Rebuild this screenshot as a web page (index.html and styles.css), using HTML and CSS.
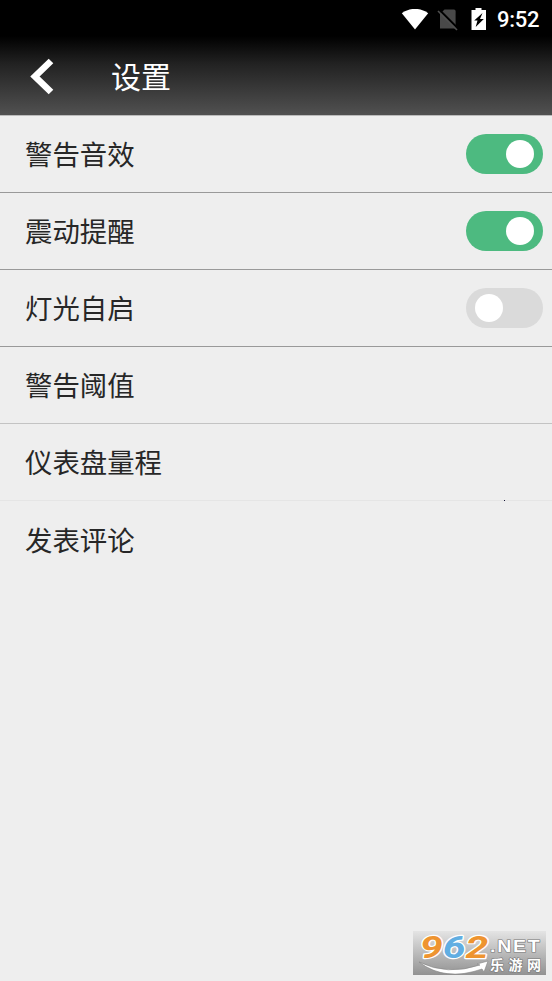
FILE: index.html
```html
<!DOCTYPE html>
<html lang="zh-CN">
<head>
<meta charset="utf-8">
<title>设置</title>
<link rel="stylesheet" href="styles.css">
</head>
<body>
<header class="top">
  <div class="status">
    <svg class="wifi" width="28" height="22" viewBox="0 0 28 22"><path d="M.8 4.2C8.500-1.600 19.500-1.600 27.200 4.200L14 20.400Z" fill="#fff"/></svg>
    <svg class="nosim" width="22" height="24" viewBox="0 0 22 24"><path d="M7.500 1.500H17q1.600 0 1.600 1.600V20.500H3V6Z" fill="#494949"/><path d="M2.200 1.800L21.500 21" stroke="#000" stroke-width="2.200"/><path d="M1 3L20 22" stroke="#505050" stroke-width="1.600"/></svg>
    <svg class="battery" width="16" height="22" viewBox="0 0 16 22"><path d="M4.500 0h6v2H15v20H.5V2h4Z" fill="#fff"/><path d="M11.500 5L3.200 12.500H6.500L4.700 19L12.800 11H9Z" fill="#000"/></svg>
    <span class="clock">9:52</span>
  </div>
  <div class="bar">
    <svg class="back" width="24" height="38" viewBox="0 0 24 38"><path d="M21 3L5 18.500L21 34" fill="none" stroke="#fff" stroke-width="6.600"/></svg>
    <h1>设置</h1>
  </div>
</header>
<main class="list">
  <div class="row"><span>警告音效</span><i class="switch on"></i></div>
  <div class="row"><span>震动提醒</span><i class="switch on"></i></div>
  <div class="row"><span>灯光自启</span><i class="switch"></i></div>
  <div class="row light"><span>警告阈值</span></div>
  <div class="row faint"><span>仪表盘量程</span></div>
  <div class="row last"><span>发表评论</span></div>
</main>
<div class="speck"></div>
<div class="mark">
  <svg width="133" height="44" viewBox="0 0 133 44">
    <defs><linearGradient id="plate" x2="0" y2="1"><stop stop-color="#e4e4e4"/><stop offset="1" stop-color="#929292"/></linearGradient></defs>
    <rect width="133" height="44" fill="url(#plate)"/>
    <path d="M6 31Q34 45 67 34L64 33L75 30L71 41L69 38Q32 51 6 31Z" fill="#fff" stroke="#858585" stroke-width=".6"/>
    <g class="digits" transform="translate(7 27) scale(1.28 1)" stroke="#fff" stroke-width="2.400" stroke-linejoin="round" paint-order="stroke">
      <text><tspan fill="#ee9430">9</tspan><tspan fill="#61aee2">6</tspan><tspan fill="#ee9430">2</tspan></text>
    </g>
    <g fill="#fff" stroke="#777" stroke-width="1.200" paint-order="stroke">
      <text class="net" transform="translate(77 21) scale(1.15 1)">.NET</text>
      <text class="name" x="77" y="39" textLength="51">乐游网</text>
    </g>
  </svg>
</div>
</body>
</html>
```

FILE: styles.css
```css
* { box-sizing: border-box; }
body {
  margin: 0;
  min-height: 981px;
  background: #eee;
  color: #272727;
  font-family: "Noto Sans CJK SC", sans-serif;
}
.top {
  height: 115px;
  background: linear-gradient(#000 0, #000 36px, #222 64px, #505050 114px);
  color: #fff;
}
.status {
  display: flex;
  align-items: center;
  justify-content: flex-end;
  height: 39px;
  padding-right: 12px;
}
.wifi { margin-right: 1px; }
.nosim { margin-left: 7px; }
.battery { margin-left: 12px; margin-top: -1px; }
.clock {
  margin-left: 10px;
  width: 43px;
  font: 500 22px/41px Roboto, sans-serif;
  letter-spacing: -0.3px;
  white-space: nowrap;
}
.bar {
  display: flex;
  align-items: center;
  height: 76px;
  padding-left: 30px;
}
.back { display: block; }
h1 {
  margin: -4px 0 0 57px;
  font-size: 30px;
  line-height: 44px;
  font-weight: 400;
}
.list { border-top: 1px solid #bbb; }
.row {
  display: flex;
  align-items: center;
  justify-content: space-between;
  height: 77px;
  padding: 0 9px 0 25px;
  border-bottom: 1px solid #999;
  font-size: 27.400px;
  line-height: 40px;
}
.row span { margin-top: -2px; }
.light { border-color: #c3c3c3; }
.faint { border-color: #e5e5e5; }
.last { border: 0; }
.switch {
  display: flex;
  align-items: center;
  width: 77px;
  height: 40px;
  padding: 0 9px;
  border-radius: 20px;
  background: #dadada;
}
.switch::before {
  content: "";
  width: 28px;
  height: 28px;
  border-radius: 50%;
  background: #fff;
}
.on { justify-content: flex-end; background: #4dba80; }
.speck {
  position: absolute;
  left: 504px;
  top: 500px;
  width: 1px;
  height: 1px;
  background: #113;
}
.mark {
  position: absolute;
  left: 413px;
  top: 931px;
  width: 133px;
  height: 44px;
}
.mark svg { display: block; overflow: visible; }
.digits { font: italic 700 32px Roboto, sans-serif; }
.net { font: 700 17px "Liberation Sans", sans-serif; letter-spacing: 1.500px; }
.name { font: 700 14px "Noto Sans CJK SC", sans-serif; }
```
